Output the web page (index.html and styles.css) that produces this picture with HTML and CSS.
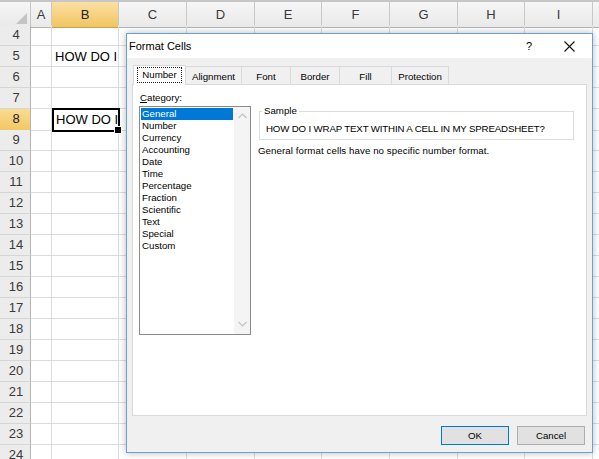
FILE: index.html
```html
<!DOCTYPE html>
<html>
<head>
<meta charset="utf-8">
<title>Format Cells</title>
<link rel="stylesheet" href="styles.css">
</head>
<body>
<div class="sheet">
  <div class="row hdr">
    <div class="corner"><svg width="11" height="11" viewBox="0 0 11 11"><path d="M11 0 L11 11 L0 11 Z" fill="#c4c4c4"/></svg></div>
    <div class="ch">A</div><div class="ch selh">B</div><div class="ch">C</div><div class="ch">D</div><div class="ch">E</div><div class="ch">F</div><div class="ch">G</div><div class="ch">H</div><div class="ch">I</div><div class="ch"></div>
  </div>
  <div class="row"><div class="rh">4</div><div></div><div></div><div></div><div></div><div></div><div></div><div></div><div></div><div></div><div></div></div>
  <div class="row"><div class="rh">5</div><div></div><div class="t">HOW DO I</div><div></div><div></div><div></div><div></div><div></div><div></div><div></div><div></div></div>
  <div class="row"><div class="rh">6</div><div></div><div></div><div></div><div></div><div></div><div></div><div></div><div></div><div></div><div></div></div>
  <div class="row"><div class="rh">7</div><div></div><div></div><div></div><div></div><div></div><div></div><div></div><div></div><div></div><div></div></div>
  <div class="row"><div class="rh selr">8</div><div></div><div class="t cur">HOW DO I</div><div></div><div></div><div></div><div></div><div></div><div></div><div></div><div></div></div>
  <div class="row"><div class="rh">9</div><div></div><div></div><div></div><div></div><div></div><div></div><div></div><div></div><div></div><div></div></div>
  <div class="row"><div class="rh">10</div><div></div><div></div><div></div><div></div><div></div><div></div><div></div><div></div><div></div><div></div></div>
  <div class="row"><div class="rh">11</div><div></div><div></div><div></div><div></div><div></div><div></div><div></div><div></div><div></div><div></div></div>
  <div class="row"><div class="rh">12</div><div></div><div></div><div></div><div></div><div></div><div></div><div></div><div></div><div></div><div></div></div>
  <div class="row"><div class="rh">13</div><div></div><div></div><div></div><div></div><div></div><div></div><div></div><div></div><div></div><div></div></div>
  <div class="row"><div class="rh">14</div><div></div><div></div><div></div><div></div><div></div><div></div><div></div><div></div><div></div><div></div></div>
  <div class="row"><div class="rh">15</div><div></div><div></div><div></div><div></div><div></div><div></div><div></div><div></div><div></div><div></div></div>
  <div class="row"><div class="rh">16</div><div></div><div></div><div></div><div></div><div></div><div></div><div></div><div></div><div></div><div></div></div>
  <div class="row"><div class="rh">17</div><div></div><div></div><div></div><div></div><div></div><div></div><div></div><div></div><div></div><div></div></div>
  <div class="row"><div class="rh">18</div><div></div><div></div><div></div><div></div><div></div><div></div><div></div><div></div><div></div><div></div></div>
  <div class="row"><div class="rh">19</div><div></div><div></div><div></div><div></div><div></div><div></div><div></div><div></div><div></div><div></div></div>
  <div class="row"><div class="rh">20</div><div></div><div></div><div></div><div></div><div></div><div></div><div></div><div></div><div></div><div></div></div>
  <div class="row"><div class="rh">21</div><div></div><div></div><div></div><div></div><div></div><div></div><div></div><div></div><div></div><div></div></div>
  <div class="row"><div class="rh">22</div><div></div><div></div><div></div><div></div><div></div><div></div><div></div><div></div><div></div><div></div></div>
  <div class="row"><div class="rh">23</div><div></div><div></div><div></div><div></div><div></div><div></div><div></div><div></div><div></div><div></div></div>
  <div class="row"><div class="rh">24</div><div></div><div></div><div></div><div></div><div></div><div></div><div></div><div></div><div></div><div></div></div>
</div>

<div class="dialog">
  <div class="titlebar">
    <span class="title">Format Cells</span>
    <span class="help">?</span>
    <span class="close"><svg width="11" height="11" viewBox="0 0 11 11"><path d="M0.5 0.5 L10.5 10.5 M10.5 0.5 L0.5 10.5" stroke="#111" stroke-width="1.1" fill="none"/></svg></span>
  </div>
  <div class="dbody">
    <div class="tabs">
      <div class="tab active w-num"><span class="focus">Number</span></div>
      <div class="tab w-align">Alignment</div>
      <div class="tab w-font">Font</div>
      <div class="tab w-border">Border</div>
      <div class="tab w-fill">Fill</div>
      <div class="tab w-prot">Protection</div>
    </div>
    <div class="panel">
      <div class="left">
        <div class="lbl"><u>C</u>ategory:</div>
        <div class="listbox">
          <ul class="items">
            <li class="selected">General</li>
            <li>Number</li>
            <li>Currency</li>
            <li>Accounting</li>
            <li>Date</li>
            <li>Time</li>
            <li>Percentage</li>
            <li>Fraction</li>
            <li>Scientific</li>
            <li>Text</li>
            <li>Special</li>
            <li>Custom</li>
          </ul>
          <div class="scroll">
            <svg width="9" height="6" viewBox="0 0 9 6"><path d="M0.5 5 L4.5 1 L8.5 5" stroke="#c3c3c3" stroke-width="1.2" fill="none"/></svg>
            <svg width="9" height="6" viewBox="0 0 9 6"><path d="M0.5 1 L4.5 5 L8.5 1" stroke="#c3c3c3" stroke-width="1.2" fill="none"/></svg>
          </div>
        </div>
      </div>
      <div class="right">
        <fieldset class="sample">
          <legend>Sample</legend>
          <div class="sample-text">HOW DO I WRAP TEXT WITHIN A CELL IN MY SPREADSHEET?</div>
        </fieldset>
        <p class="desc">General format cells have no specific number format.</p>
      </div>
    </div>
    <div class="buttons">
      <button class="btn ok">OK</button>
      <button class="btn">Cancel</button>
    </div>
  </div>
</div>
</body>
</html>
```
FILE: styles.css
```css
* { box-sizing: border-box; }
html, body { margin: 0; padding: 0; overflow: hidden; background: #fff; }
body {
  position: relative;
  width: 599px;
  height: 459px;
  font-family: "Liberation Sans", Arial, sans-serif;
  color: #000;
}

/* ---------- spreadsheet ---------- */
.sheet { width: 599px; }
.row {
  display: grid;
  grid-template-columns: 31px 21px 67px 68px 68px 67px 68px 68px 67px 68px 20px;
  height: 21px;
}
.row > div {
  border-right: 1px solid #dadcdd;
  border-bottom: 1px solid #dadcdd;
}
.hdr { height: 25px; border-top: 2px solid #c6c6c6; }
.hdr > div {
  background: linear-gradient(#f6f6f6, #e9e9e9);
  border-right: 1px solid #c8c8c8;
  border-bottom: 1px solid #b4b4b4;
  font-size: 13px;
  color: #3a3a3a;
  text-align: center;
  line-height: 25px;
}
.hdr > .corner {
  display: flex;
  align-items: flex-end;
  justify-content: flex-end;
  padding: 0 3px 3px 0;
}
.hdr > .selh {
  background: linear-gradient(#fbe0a4, #f1c561);
  border-bottom-color: #c9a04a;
  color: #222;
}
.row > .rh {
  background: #ececec;
  border-right: 1px solid #b4b4b4;
  border-bottom: 1px solid #d6d6d6;
  font-size: 13px;
  color: #3a3a3a;
  text-align: center;
  padding-left: 2px;
  line-height: 20px;
}
.row > .selr {
  background: linear-gradient(#f9dc91, #f2c765);
  color: #222;
}
.t {
  font-size: 13px;
  line-height: 21px;
  padding-left: 3px;
  white-space: nowrap;
  overflow: hidden;
}
.row > .cur { position: relative; overflow: visible; padding-left: 4px; }
.cur::after {
  content: "";
  position: absolute;
  left: 0; top: -1px; right: -2px; bottom: -2px;
  border: 2px solid #000;
}
.cur::before {
  content: "";
  position: absolute;
  right: -4px; bottom: -4px;
  width: 6px; height: 6px;
  background: #000;
  border: 1px solid #fff;
  z-index: 1;
}

/* ---------- dialog ---------- */
.dialog {
  position: absolute;
  left: 126px;
  top: 33px;
  width: 467px;
  height: 420px;
  border: 1px solid #63a3da;
  background: #f0f0f0;
  box-shadow: 0 0 7px rgba(0, 0, 0, 0.28);
  font-size: 9.7px;
  display: flex;
  flex-direction: column;
}
.titlebar {
  height: 24px;
  background: #fff;
  display: flex;
  align-items: center;
  flex: none;
}
.title { font-size: 11px; padding-left: 2px; color: #000; }
.help {
  margin-left: auto;
  width: 36px;
  text-align: center;
  font-size: 11px;
}
.close {
  width: 45px;
  display: flex;
  justify-content: center;
  align-items: center;
}
.dbody { flex: 1; display: flex; flex-direction: column; }

.tabs {
  display: flex;
  align-items: flex-end;
  height: 18px;
  margin: 8px 0 0 6px;
}
.tab {
  height: 18px;
  border: 1px solid #d9d9d9;
  border-bottom: none;
  border-left: none;
  background: #f0f0f0;
  display: flex;
  align-items: center;
  justify-content: center;
  padding-top: 1px;
}
.tab.active {
  position: relative;
  z-index: 1;
  height: 20px;
  margin-bottom: -1px;
  background: #fff;
  border-left: 1px solid #d9d9d9;
  padding-top: 0;
  padding-bottom: 1px;
}
.focus {
  border: 1px dotted #222;
  padding: 1px 4px 1px 4px;
  line-height: 12px;
}
.w-num { width: 53px; }
.w-align { width: 56px; }
.w-font { width: 49px; }
.w-border { width: 49px; }
.w-fill { width: 52px; }
.w-prot { width: 57px; }

.panel {
  margin-left: 5px;
  width: 455px;
  height: 332px;
  background: #fff;
  border: 1px solid #d9d9d9;
  display: flex;
  padding: 6px 0 0 6px;
  flex: none;
}
.left { width: 112px; flex: none; }
.lbl { padding-left: 1px; line-height: 13px; }
.listbox {
  margin-top: 2px;
  height: 229px;
  border: 1px solid #8a8a8a;
  display: flex;
}
.items {
  list-style: none;
  margin: 0;
  padding: 1px;
  flex: 1;
}
.items li {
  height: 12px;
  line-height: 12px;
  padding-left: 1px;
  white-space: nowrap;
}
.items li.selected { background: #0078d7; color: #fff; }
.scroll {
  width: 16px;
  background: #f4f4f4;
  display: flex;
  flex-direction: column;
  justify-content: space-between;
  align-items: center;
  padding: 6px 0 7px;
}

.right { margin-left: 7px; width: 318px; }
.sample {
  margin: 14px 0 0 1px;
  width: 315px;
  border: 1px solid #dcdcdc;
  padding: 0 0 0 6px;
  min-width: 0;
}
.sample legend {
  margin-left: -4px;
  padding: 0 2px;
  line-height: 12px;
}
.sample-text {
  line-height: 13px;
  padding: 5px 0 4px;
  white-space: nowrap;
  letter-spacing: -0.15px;
}
.desc { margin: 4px 0 0; line-height: 13px; letter-spacing: 0.08px; }

.buttons {
  display: flex;
  justify-content: flex-end;
  gap: 8px;
  padding-right: 7px;
  margin-top: 10px;
}
.btn {
  width: 68px;
  height: 19px;
  border: 1px solid #adadad;
  background: #e1e1e1;
  font-family: "Liberation Sans", Arial, sans-serif;
  font-size: 9.7px;
  color: #000;
  padding: 0;
}
.btn.ok { border: 1px solid #0078d7; }
```
